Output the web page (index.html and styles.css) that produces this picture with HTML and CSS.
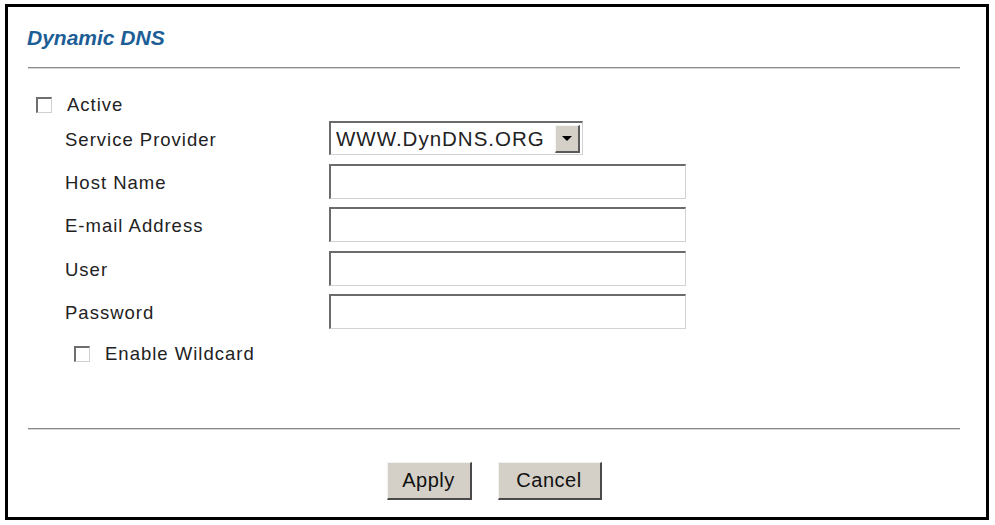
FILE: index.html
```html
<!DOCTYPE html>
<html>
<head>
<meta charset="utf-8">
<title>Dynamic DNS</title>
<link rel="stylesheet" href="styles.css">
</head>
<body>
<div class="frame">
  <div class="title">Dynamic DNS</div>
  <div class="rule"></div>
  <label class="check-row active-row">
    <input type="checkbox" class="box">
    <span>Active</span>
  </label>
  <div class="rows">
    <div class="row row-select">
      <span class="label">Service Provider</span>
      <div class="select">
        <span class="select-value">WWW.DynDNS.ORG</span>
        <span class="select-arrow"><span class="tri"></span></span>
      </div>
    </div>
    <div class="row">
      <span class="label">Host Name</span>
      <input type="text" class="field">
    </div>
    <div class="row">
      <span class="label">E-mail Address</span>
      <input type="text" class="field">
    </div>
    <div class="row">
      <span class="label">User</span>
      <input type="text" class="field">
    </div>
    <div class="row">
      <span class="label">Password</span>
      <input type="password" class="field">
    </div>
  </div>
  <label class="check-row wildcard-row">
    <input type="checkbox" class="box">
    <span>Enable Wildcard</span>
  </label>
  <div class="rule rule-bottom"></div>
  <div class="buttons">
    <button class="btn btn-apply">Apply</button>
    <button class="btn btn-cancel">Cancel</button>
  </div>
</div>
</body>
</html>
```
FILE: styles.css
```css
html, body {
  margin: 0;
  padding: 0;
  background: #ffffff;
}
body {
  font-family: "Liberation Sans", Arial, sans-serif;
  color: #222222;
}
.frame {
  margin: 4px 0 0 5px;
  width: 984px;
  height: 516px;
  box-sizing: border-box;
  border: 3px solid #000;
  padding: 19px 26px 0 20px;
  display: flex;
  flex-direction: column;
}
.title {
  font-size: 21px;
  line-height: 24px;
  font-weight: bold;
  font-style: italic;
  color: #1d5e96;
  margin-left: -1px;
  height: 24px;
}
.rule {
  margin-top: 17px;
  height: 0;
  border-top: 1px solid #8a8a8a;
  border-bottom: 1px solid #d6d6d6;
}
.check-row {
  display: flex;
  align-items: center;
  height: 18px;
  font-size: 18.5px;
  line-height: 18px;
  letter-spacing: 1px;
}
.box {
  appearance: none;
  -webkit-appearance: none;
  margin: 0;
  width: 16px;
  height: 16px;
  box-sizing: border-box;
  background: #fff;
  border-top: 2px solid #6e6e6e;
  border-left: 2px solid #6e6e6e;
  border-bottom: 1px solid #d0d0d0;
  border-right: 1px solid #d0d0d0;
  margin-right: 15px;
  flex: none;
}
.active-row {
  margin-top: 27px;
  margin-left: 8px;
}
.rows {
  margin-top: 7px;
  display: flex;
  flex-direction: column;
  gap: 8.5px;
}
.row {
  display: flex;
  align-items: center;
  height: 35px;
}
.row-select {
  height: 34px;
}
.label {
  width: 264px;
  margin-left: 37px;
  padding-top: 3px;
  font-size: 18.5px;
  letter-spacing: 1px;
  flex: none;
}
.field {
  width: 357px;
  height: 35px;
  box-sizing: border-box;
  margin: 0;
  padding: 0 4px;
  background: #fff;
  border-top: 2px solid #6b6b6b;
  border-left: 2px solid #6b6b6b;
  border-bottom: 1px solid #d2d2d2;
  border-right: 1px solid #d2d2d2;
  outline: none;
}
.select {
  width: 254px;
  height: 34px;
  box-sizing: border-box;
  background: #fff;
  border-top: 2px solid #6b6b6b;
  border-left: 2px solid #6b6b6b;
  border-bottom: 1px solid #d2d2d2;
  border-right: 1px solid #d2d2d2;
  display: flex;
  align-items: center;
  padding: 1px 2px 1px 5px;
}
.select-value {
  flex: 1;
  font-size: 20.5px;
  letter-spacing: 1px;
  white-space: nowrap;
}
.select-arrow {
  width: 25px;
  height: 28px;
  box-sizing: border-box;
  background: #d4d0c8;
  border-top: 1px solid #f4f4f4;
  border-left: 1px solid #f4f4f4;
  border-bottom: 2px solid #5a5a5a;
  border-right: 2px solid #5a5a5a;
  display: flex;
  align-items: center;
  justify-content: center;
  flex: none;
}
.tri {
  width: 0;
  height: 0;
  border-left: 5px solid transparent;
  border-right: 5px solid transparent;
  border-top: 5px solid #000;
}
.wildcard-row {
  margin-top: 16px;
  margin-left: 46px;
}
.rule-bottom {
  margin-top: 65px;
}
.buttons {
  margin-top: 32px;
  display: flex;
  justify-content: center;
  gap: 26px;
}
.btn {
  height: 38px;
  box-sizing: border-box;
  margin: 0;
  padding: 0;
  background: #d4d0c8;
  font-family: "Liberation Sans", Arial, sans-serif;
  font-size: 20px;
  letter-spacing: 0.5px;
  color: #111;
  border-top: 1px solid #f2f2f2;
  border-left: 1px solid #f2f2f2;
  border-bottom: 2px solid #4a4a4a;
  border-right: 2px solid #4a4a4a;
}
.btn-apply {
  width: 85px;
}
.btn-cancel {
  width: 104px;
}
```
